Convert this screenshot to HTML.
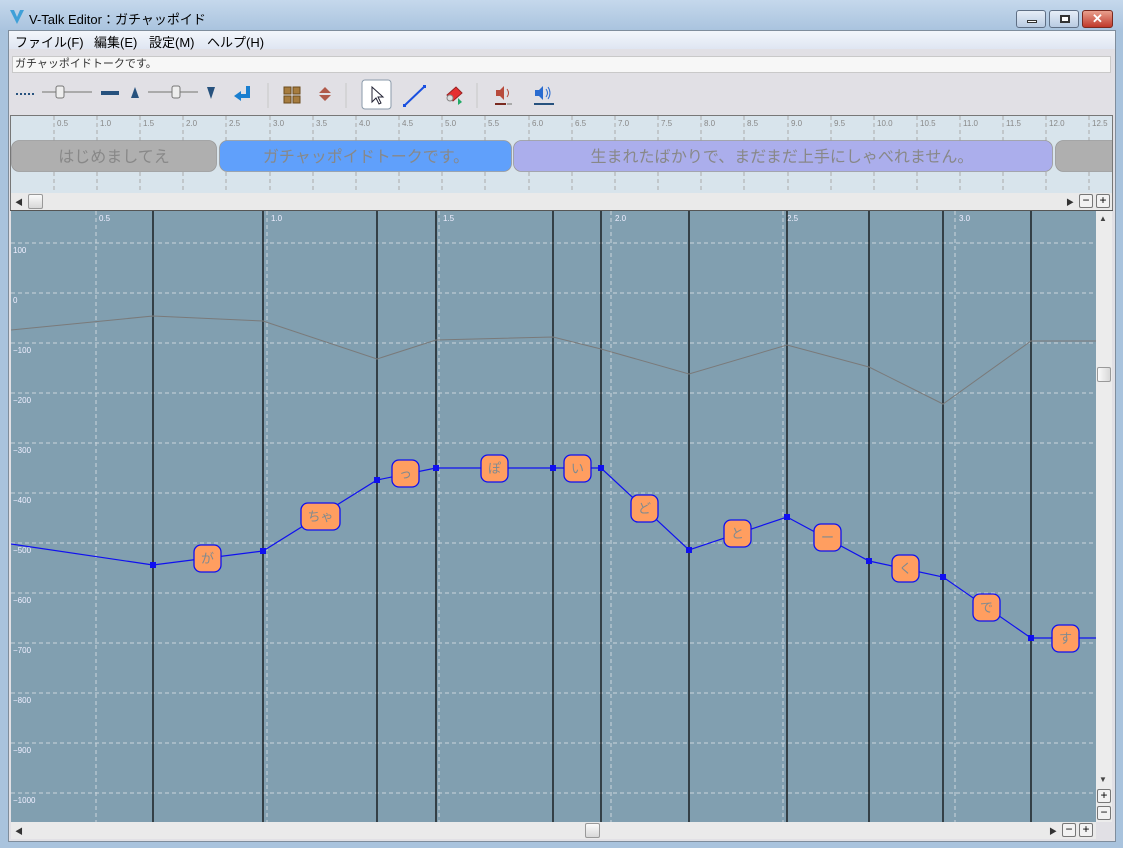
<!DOCTYPE html>
<html><head><meta charset="utf-8"><style>
*{margin:0;padding:0;box-sizing:border-box}
body{width:1123px;height:848px;overflow:hidden;background:#a9c3dd;font-family:"Liberation Sans","Noto Sans CJK JP",sans-serif;position:relative}
.a{position:absolute}
.title{left:0;top:0;width:1123px;height:31px;background:linear-gradient(#c5d8ec,#a9c3de)}
.inner{left:8px;top:30px;width:1108px;height:812px;background:#e1e0e5;border:1px solid #7f8d9c}
.menu{left:9px;top:31px;width:1106px;height:18px;background:linear-gradient(#f3f6fb,#dfe6f2);font-size:13px;color:#000}
.menu span{position:absolute;top:1px}
.wbtn{top:10px;height:18px;border:1px solid #5f6f85;border-radius:3px;background:linear-gradient(#e6eef8,#b9cbe2)}
</style></head><body>
<div class="a title"></div>
<svg class="a" style="left:9px;top:9px" width="16" height="16" viewBox="0 0 16 16"><path d="M1 1 L8 15 L15 1 L11 1 L8 8 L5 1Z" fill="#3fa0d8"/></svg>
<div class="a" style="left:29px;top:9px;font-size:13px;color:#000">V-Talk Editor：ガチャッポイド</div>
<div class="a wbtn" style="left:1016px;width:30px"><div class="a" style="left:10px;top:9px;width:10px;height:3px;background:#fff;border:1px solid #333"></div></div>
<div class="a wbtn" style="left:1049px;width:30px"><div class="a" style="left:10px;top:4px;width:10px;height:8px;border:2px solid #333;background:#fff"></div></div>
<div class="a wbtn" style="left:1082px;width:31px;background:linear-gradient(#e9a08e,#c0392b);border-color:#7a2a20;color:#fff;font-weight:bold;font-size:13px;text-align:center;line-height:16px">✕</div>
<div class="a inner"></div>
<div class="a menu"><span style="left:6px">ファイル(F)</span><span style="left:85px">編集(E)</span><span style="left:140px">設定(M)</span><span style="left:198px">ヘルプ(H)</span></div>
<div class="a" style="left:12px;top:56px;width:1099px;height:17px;background:#f7f7f7;border:1px solid #c9c9c9;font-size:11px;color:#333;padding-left:2px;line-height:15px">ガチャッポイドトークです。</div>
<!-- toolbar -->
<svg class="a" style="left:10px;top:78px" width="560" height="34">
<g fill="#27527e"><rect x="6" y="15" width="2" height="2"/><rect x="10" y="15" width="2" height="2"/><rect x="14" y="15" width="2" height="2"/><rect x="18" y="15" width="2" height="2"/><rect x="22" y="15" width="2" height="2"/></g>
<line x1="32" y1="14" x2="82" y2="14" stroke="#aaa" stroke-width="2"/><rect x="46" y="8" width="8" height="12" rx="2" fill="#eee" stroke="#777"/>
<rect x="91" y="13" width="18" height="4" fill="#27527e"/>
<path d="M121 20 L125 9 L129 20Z" fill="#27527e"/>
<line x1="138" y1="14" x2="188" y2="14" stroke="#aaa" stroke-width="2"/><rect x="162" y="8" width="8" height="12" rx="2" fill="#eee" stroke="#777"/>
<path d="M197 9 L205 9 L201 21Z" fill="#27527e"/>
<path d="M238 8 L238 18 L230 18" stroke="#1a7fd0" stroke-width="4" fill="none"/><path d="M224 18 L231 13 L231 23Z" fill="#1a7fd0"/>
<line x1="258" y1="5" x2="258" y2="30" stroke="#c8c8c8"/>
<g fill="#a67c3f" stroke="#6b4c1e"><rect x="274" y="9" width="7" height="7"/><rect x="283" y="9" width="7" height="7"/><rect x="274" y="18" width="7" height="7"/><rect x="283" y="18" width="7" height="7"/></g>
<path d="M315 9 L321 15 L309 15Z M309 17 L321 17 L315 23Z" fill="#b05a4a"/>
<line x1="336" y1="5" x2="336" y2="30" stroke="#c8c8c8"/>
<rect x="352" y="2" width="29" height="29" rx="3" fill="#fff" stroke="#8a9aaa"/>
<path d="M362 9 L362 24 L366 20 L369 26 L371 25 L368 19 L373 19Z" fill="#fff" stroke="#223" />
<line x1="394" y1="28" x2="415" y2="8" stroke="#1a50e0" stroke-width="2"/><rect x="393" y="26" width="3" height="3" fill="#1a50e0"/><rect x="413" y="7" width="3" height="3" fill="#1a50e0"/>
<path d="M437 17 L446 9 L452 15 L443 23Z" fill="#e53030" stroke="#922"/><circle cx="440" cy="20" r="3" fill="#ddd" stroke="#888"/><path d="M448 20 L448 27 L452 24Z" fill="#2a6"/>
<line x1="467" y1="5" x2="467" y2="30" stroke="#c8c8c8"/>
<path d="M486 12 L490 12 L494 8 L494 22 L490 18 L486 18Z" fill="#b84b3c"/><path d="M497 11 Q500 15 497 19" stroke="#b84b3c" fill="none"/>
<rect x="485" y="25" width="11" height="2" fill="#7a2a20"/><rect x="497" y="25" width="5" height="2" fill="#aaa"/>
<path d="M525 12 L529 12 L533 8 L533 22 L529 18 L525 18Z" fill="#2a6cd0"/><path d="M536 11 Q539 15 536 19 M538 9 Q542 15 538 21" stroke="#2a6cd0" fill="none"/>
<rect x="524" y="25" width="20" height="2" fill="#27527e"/>
</svg>
<!-- timeline -->
<div class="a" style="left:10px;top:115px;width:1103px;height:96px;background:#d8e4ec;border:1px solid #777;border-bottom:none"></div>
<svg class="a" style="left:11px;top:116px" width="1101" height="78" font-size="8" fill="#888" font-family="Liberation Sans,sans-serif">
<g stroke="#aaa" stroke-dasharray="4,3">
<line x1="43" y1="0" x2="43" y2="78"/><line x1="86" y1="0" x2="86" y2="78"/><line x1="129" y1="0" x2="129" y2="78"/><line x1="172" y1="0" x2="172" y2="78"/><line x1="215" y1="0" x2="215" y2="78"/><line x1="259" y1="0" x2="259" y2="78"/><line x1="302" y1="0" x2="302" y2="78"/><line x1="345" y1="0" x2="345" y2="78"/><line x1="388" y1="0" x2="388" y2="78"/><line x1="431" y1="0" x2="431" y2="78"/><line x1="474" y1="0" x2="474" y2="78"/><line x1="518" y1="0" x2="518" y2="78"/><line x1="561" y1="0" x2="561" y2="78"/><line x1="604" y1="0" x2="604" y2="78"/><line x1="647" y1="0" x2="647" y2="78"/><line x1="690" y1="0" x2="690" y2="78"/><line x1="733" y1="0" x2="733" y2="78"/><line x1="777" y1="0" x2="777" y2="78"/><line x1="820" y1="0" x2="820" y2="78"/><line x1="863" y1="0" x2="863" y2="78"/><line x1="906" y1="0" x2="906" y2="78"/><line x1="949" y1="0" x2="949" y2="78"/><line x1="992" y1="0" x2="992" y2="78"/><line x1="1035" y1="0" x2="1035" y2="78"/><line x1="1078" y1="0" x2="1078" y2="78"/>
</g>
<g>
<text x="46" y="10">0.5</text><text x="89" y="10">1.0</text><text x="132" y="10">1.5</text><text x="175" y="10">2.0</text><text x="218" y="10">2.5</text><text x="262" y="10">3.0</text><text x="305" y="10">3.5</text><text x="348" y="10">4.0</text><text x="391" y="10">4.5</text><text x="434" y="10">5.0</text><text x="477" y="10">5.5</text><text x="521" y="10">6.0</text><text x="564" y="10">6.5</text><text x="607" y="10">7.0</text><text x="650" y="10">7.5</text><text x="693" y="10">8.0</text><text x="736" y="10">8.5</text><text x="780" y="10">9.0</text><text x="823" y="10">9.5</text><text x="866" y="10">10.0</text><text x="909" y="10">10.5</text><text x="952" y="10">11.0</text><text x="995" y="10">11.5</text><text x="1038" y="10">12.0</text><text x="1081" y="10">12.5</text>
</g>
<g stroke="#999" font-size="16" font-family="Liberation Sans,Noto Sans CJK JP,sans-serif" stroke-width="0.8">
<rect x="0.5" y="24.5" width="205" height="31" rx="8" fill="#afafaf"/>
<rect x="208.5" y="24.5" width="292" height="31" rx="8" fill="#60a0fb"/>
<rect x="502.5" y="24.5" width="539" height="31" rx="8" fill="#abaeec"/>
<rect x="1044.5" y="24.5" width="70" height="31" rx="8" fill="#afafaf"/>
</g>
<g fill="#888" font-size="16" font-family="Liberation Sans,Noto Sans CJK JP,sans-serif" text-anchor="middle">
<text x="103" y="46">はじめましてえ</text><text x="355" y="46">ガチャッポイドトークです。</text><text x="771" y="46">生まれたばかりで、まだまだ上手にしゃべれません。</text>
</g>
</svg>
<div class="a" style="left:11px;top:193px;width:1101px;height:17px;background:#eaeaea"></div>
<div class="a" style="left:15px;top:197px;font-size:8px;color:#333">◀</div>
<div class="a" style="left:28px;top:194px;width:15px;height:15px;background:linear-gradient(#fafafa,#d8d8d8);border:1px solid #999;border-radius:2px"></div>
<div class="a" style="left:1066px;top:197px;font-size:8px;color:#333">▶</div>
<div class="a" style="left:1079px;top:194px;width:14px;height:14px;border:1px solid #777;border-radius:2px;background:#f2f2f2;font-size:12px;line-height:11px;text-align:center">−</div>
<div class="a" style="left:1096px;top:194px;width:14px;height:14px;border:1px solid #777;border-radius:2px;background:#f2f2f2;font-size:12px;line-height:11px;text-align:center">+</div>
<!-- graph -->
<div class="a" style="left:10px;top:210px;width:1103px;height:1px;background:#555"></div>
<svg class="a" style="left:11px;top:211px" width="1085" height="611" font-family="Liberation Sans,sans-serif">
<rect width="1085" height="611" fill="#819fb0"/>
<g stroke="#ccd6dc" stroke-dasharray="4,3">
<line x1="0" y1="32" x2="1085" y2="32"/><line x1="0" y1="82" x2="1085" y2="82"/><line x1="0" y1="132" x2="1085" y2="132"/><line x1="0" y1="182" x2="1085" y2="182"/><line x1="0" y1="232" x2="1085" y2="232"/><line x1="0" y1="282" x2="1085" y2="282"/><line x1="0" y1="332" x2="1085" y2="332"/><line x1="0" y1="382" x2="1085" y2="382"/><line x1="0" y1="432" x2="1085" y2="432"/><line x1="0" y1="482" x2="1085" y2="482"/><line x1="0" y1="532" x2="1085" y2="532"/><line x1="0" y1="582" x2="1085" y2="582"/>
<line x1="85" y1="0" x2="85" y2="611"/><line x1="256" y1="0" x2="256" y2="611"/><line x1="428" y1="0" x2="428" y2="611"/><line x1="600" y1="0" x2="600" y2="611"/><line x1="772" y1="0" x2="772" y2="611"/><line x1="944" y1="0" x2="944" y2="611"/>
</g>
<g fill="#eef" font-size="8"><text x="88" y="10">0.5</text><text x="260" y="10">1.0</text><text x="432" y="10">1.5</text><text x="604" y="10">2.0</text><text x="776" y="10">2.5</text><text x="948" y="10">3.0</text>
<text x="2" y="42">100</text><text x="2" y="92">0</text><text x="2" y="142">−100</text><text x="2" y="192">−200</text><text x="2" y="242">−300</text><text x="2" y="292">−400</text><text x="2" y="342">−500</text><text x="2" y="392">−600</text><text x="2" y="442">−700</text><text x="2" y="492">−800</text><text x="2" y="542">−900</text><text x="2" y="592">−1000</text></g>
<g stroke="#000" stroke-width="1.2">
<line x1="142" y1="0" x2="142" y2="611"/><line x1="252" y1="0" x2="252" y2="611"/><line x1="366" y1="0" x2="366" y2="611"/><line x1="425" y1="0" x2="425" y2="611"/><line x1="542" y1="0" x2="542" y2="611"/><line x1="590" y1="0" x2="590" y2="611"/><line x1="678" y1="0" x2="678" y2="611"/><line x1="776" y1="0" x2="776" y2="611"/><line x1="858" y1="0" x2="858" y2="611"/><line x1="932" y1="0" x2="932" y2="611"/><line x1="1020" y1="0" x2="1020" y2="611"/>
</g>
<polyline fill="none" stroke="#7a7a7a" points="0,119 142,105 252,110 366,148 425,129 542,126 590,138 678,163 776,134 858,156 932,193 1020,130 1085,130"/>
<polyline fill="none" stroke="#1010f0" stroke-width="1.2" points="0,333 142,354 252,340 366,269 425,257 542,257 590,257 678,339 776,306 858,350 932,366 1020,427 1085,427"/>
<g fill="#1010f0"><rect x="139" y="351" width="6" height="6"/><rect x="249" y="337" width="6" height="6"/><rect x="363" y="266" width="6" height="6"/><rect x="422" y="254" width="6" height="6"/><rect x="539" y="254" width="6" height="6"/><rect x="587" y="254" width="6" height="6"/><rect x="675" y="336" width="6" height="6"/><rect x="773" y="303" width="6" height="6"/><rect x="855" y="347" width="6" height="6"/><rect x="929" y="363" width="6" height="6"/><rect x="1017" y="424" width="6" height="6"/></g>
<g fill="#ff9e60" stroke="#1010f0" stroke-width="1.3">
<rect x="183" y="334" width="27" height="27" rx="7"/><rect x="290" y="292" width="39" height="27" rx="7"/><rect x="381" y="249" width="27" height="27" rx="7"/><rect x="470" y="244" width="27" height="27" rx="7"/><rect x="553" y="244" width="27" height="27" rx="7"/><rect x="620" y="284" width="27" height="27" rx="7"/><rect x="713" y="309" width="27" height="27" rx="7"/><rect x="803" y="313" width="27" height="27" rx="7"/><rect x="881" y="344" width="27" height="27" rx="7"/><rect x="962" y="383" width="27" height="27" rx="7"/><rect x="1041" y="414" width="27" height="27" rx="7"/>
</g>
<g fill="#7f8a90" font-size="13" text-anchor="middle" font-family="Liberation Sans,Noto Sans CJK JP,sans-serif">
<text x="196.5" y="352">が</text><text x="309.5" y="310">ちゃ</text><text x="394.5" y="267">っ</text><text x="483.5" y="262">ぽ</text><text x="566.5" y="262">い</text><text x="633.5" y="302">ど</text><text x="726.5" y="327">と</text><text x="816.5" y="331">ー</text><text x="894.5" y="362">く</text><text x="975.5" y="401">で</text><text x="1054.5" y="432">す</text>
</g>
</svg>
<!-- v scroll -->
<div class="a" style="left:1096px;top:211px;width:16px;height:611px;background:#ececec"></div>
<div class="a" style="left:1099px;top:214px;font-size:8px;color:#444">▲</div>
<div class="a" style="left:1097px;top:367px;width:14px;height:15px;background:linear-gradient(90deg,#fafafa,#d8d8d8);border:1px solid #999;border-radius:2px"></div>
<div class="a" style="left:1099px;top:775px;font-size:8px;color:#444">▼</div>
<div class="a" style="left:1097px;top:789px;width:14px;height:14px;border:1px solid #777;border-radius:2px;background:#f2f2f2;font-size:12px;line-height:11px;text-align:center">+</div>
<div class="a" style="left:1097px;top:806px;width:14px;height:14px;border:1px solid #777;border-radius:2px;background:#f2f2f2;font-size:12px;line-height:11px;text-align:center">−</div>
<!-- h scroll -->
<div class="a" style="left:11px;top:822px;width:1085px;height:17px;background:#eaeaea"></div>
<div class="a" style="left:15px;top:826px;font-size:8px;color:#333">◀</div>
<div class="a" style="left:585px;top:823px;width:15px;height:15px;background:linear-gradient(#fafafa,#d8d8d8);border:1px solid #999;border-radius:2px"></div>
<div class="a" style="left:1049px;top:826px;font-size:8px;color:#333">▶</div>
<div class="a" style="left:1062px;top:823px;width:14px;height:14px;border:1px solid #777;border-radius:2px;background:#f2f2f2;font-size:12px;line-height:11px;text-align:center">−</div>
<div class="a" style="left:1079px;top:823px;width:14px;height:14px;border:1px solid #777;border-radius:2px;background:#f2f2f2;font-size:12px;line-height:11px;text-align:center">+</div>
</body></html>
